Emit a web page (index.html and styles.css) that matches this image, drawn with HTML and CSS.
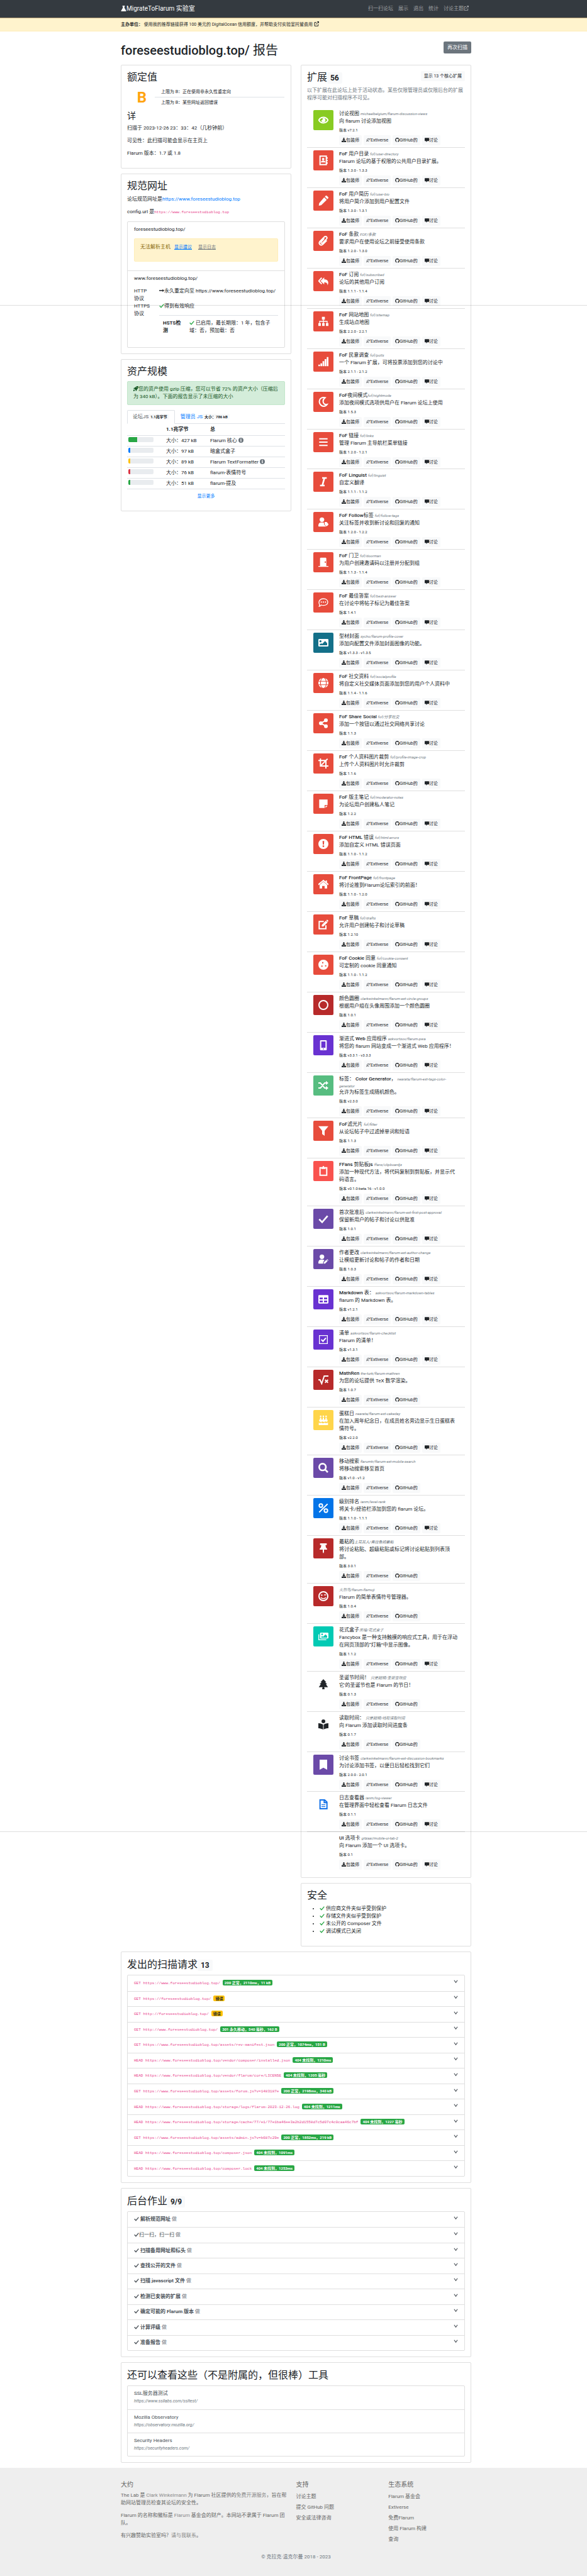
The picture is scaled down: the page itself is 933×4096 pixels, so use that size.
FILE: index.html
```
<!DOCTYPE html>
<html lang="zh-CN">
<head>
<meta charset="utf-8">
<meta name="viewport" content="width=device-width, initial-scale=1">
<title>foreseestudioblog.top/ 报告 - MigrateToFlarum 实验室</title>
<link rel="stylesheet" href="styles.css">
</head>
<body>
<svg class="sprite" aria-hidden="true">
  <symbol id="i-flask" viewBox="0 0 24 24"><path d="M7 0h10v3h-1.500v6.500L22.500 21c.8 1.500-.2 3-1.800 3H3.300c-1.600 0-2.600-1.500-1.800-3l7-11.500V3H7z"/></symbol>
  <symbol id="i-ext" viewBox="0 0 24 24"><path class="ln" d="M12 5H3v17h17v-9M9 15L21 3"/><path d="M14 0h10v10z"/></symbol>
  <symbol id="i-check" viewBox="0 0 24 24"><path class="ln thick" d="M2 13l7 7L22 5"/></symbol>
  <symbol id="i-arrow" viewBox="0 0 24 24"><path d="M0 10h16V5l8 7-8 7v-5H0z"/></symbol>
  <symbol id="i-rocket" viewBox="0 0 24 24"><path d="M23.500.5C16-.8 11 3 8 7.500H3.500L0 13h5l6 6v5l5.500-3.500V16C21 13 24.800 8 23.500.5zM17 5a2 2 0 110 4 2 2 0 010-4zM1 17c2-2 6 0 6 3-1 3-4 3-7 4 0-3 0-6 1-7z"/></symbol>
  <symbol id="i-info" viewBox="0 0 24 24"><path fill-rule="evenodd" d="M12 0a12 12 0 110 24 12 12 0 010-24zm-2 4v4h4V4zM9 10v2h1v5H9v2h6v-2h-1v-7z"/></symbol>
  <symbol id="i-down" viewBox="0 0 24 24"><path class="ln thick" d="M3 6l9 12 9-12"/></symbol>
  <symbol id="i-download" viewBox="0 0 512 512"><path d="M216 0h80c13.300 0 24 10.700 24 24v168h87.700c17.800 0 26.700 21.500 14.100 34.100L269.700 378.300c-7.500 7.500-19.800 7.500-27.300 0L90.100 226.100c-12.600-12.600-3.700-34.100 14.100-34.100H192V24c0-13.300 10.700-24 24-24zm296 376v112c0 13.300-10.700 24-24 24H24c-13.300 0-24-10.700-24-24V376c0-13.300 10.700-24 24-24h146.700l49 49c20.100 20.100 52.500 20.100 72.600 0l49-49H488c13.300 0 24 10.700 24 24z"/></symbol>
  <symbol id="i-planet" viewBox="0 0 24 24"><path class="ln thin" d="M18 9a7 7 0 10-1 7M6 17c-5 4-7 3-3 0C9 14 17 8 21 5c4-2 2 1-2 4"/></symbol>
  <symbol id="i-github" viewBox="0 0 16 16"><path d="M8 0C3.580 0 0 3.580 0 8c0 3.540 2.290 6.530 5.470 7.590.4.070.55-.17.55-.38 0-.19-.01-.82-.01-1.490-2.010.37-2.530-.49-2.690-.94-.09-.23-.48-.94-.82-1.130-.28-.15-.68-.52-.01-.53.63-.01 1.080.58 1.230.82.72 1.210 1.870.87 2.330.66.07-.52.28-.87.51-1.070-1.780-.2-3.640-.89-3.640-3.950 0-.87.31-1.590.82-2.150-.08-.2-.36-1.020.08-2.120 0 0 .67-.21 2.200.82.64-.18 1.320-.27 2-.27.68 0 1.360.09 2 .27 1.530-1.040 2.200-.82 2.200-.82.44 1.100.16 1.920.08 2.120.51.56.82 1.270.82 2.150 0 3.070-1.870 3.750-3.650 3.950.29.25.54.73.54 1.480 0 1.070-.01 1.930-.01 2.200 0 .21.15.46.55.38A8.013 8.013 0 0016 8c0-4.420-3.580-8-8-8z"/></symbol>
  <symbol id="i-bubble" viewBox="0 0 24 24"><path d="M2 1h20a2 2 0 012 2v13a2 2 0 01-2 2h-8l-6 6v-6H2a2 2 0 01-2-2V3a2 2 0 012-2z"/></symbol>
  <symbol id="i-eye" viewBox="0 0 24 24"><path class="ln" d="M1 12C6 3 18 3 23 12 18 21 6 21 1 12z"/><path d="M12 7a5 5 0 11-5 5c2 1 4-1 3-4z"/></symbol>
  <symbol id="i-address" viewBox="0 0 24 24"><path class="ln" d="M4 2h15v20H4zM21 5v3M21 11v3M21 17v3"/><circle cx="11.500" cy="9" r="3"/><path d="M6 17c0-6 11-6 11 0z"/></symbol>
  <symbol id="i-pencil" viewBox="0 0 24 24"><path d="M14 4l6 6L7 23l-6 1 1-6zM15.500 2.500l2-2c1-.8 2-.6 3 .3l2.700 2.700c.9 1 1.100 2 .3 3l-2 2z"/></symbol>
  <symbol id="i-clip" viewBox="0 0 24 24"><path class="ln" d="M14 6l-7 8c-2 3 1 5 3 3l9-9c4-4-1-9-5-5L4 13c-5 6 2 12 7 7l9-9"/></symbol>
  <symbol id="i-reply" viewBox="0 0 24 24"><path d="M14 3v5c8 0 12 5 8 14 0-5-3-7-8-7v5L5 11.500z"/><path class="ln" d="M8 4l-7 7.500L8 19"/></symbol>
  <symbol id="i-sitemap" viewBox="0 0 24 24"><path d="M8.500 1h7v7h-7zM0 16h6v7H0zM9 16h6v7H9zM18 16h6v7h-6z"/><path class="ln thin" d="M12 8v8M3 16v-4h18v4"/></symbol>
  <symbol id="i-signal" viewBox="0 0 24 24"><path d="M0 19h4v4H0zM5 16h4v7H5zM10 11h4v12h-4zM15 6h4v17h-4zM20 1h4v22h-4z"/></symbol>
  <symbol id="i-moon" viewBox="0 0 24 24"><path class="ln" d="M16 2C4-1 0 10 4 17s13 7 17 1C11 20 8 8 16 2z"/></symbol>
  <symbol id="i-bars" viewBox="0 0 24 24"><path class="ln" d="M2 4h20M2 12h20M2 20h20"/></symbol>
  <symbol id="i-italic" viewBox="0 0 24 24"><path class="ln thick" d="M9 3h11M4 21h11M14.500 3l-5 18"/></symbol>
  <symbol id="i-usertag" viewBox="0 0 24 24"><circle cx="8.500" cy="6.500" r="5.500"/><path d="M0 22c0-9 5-9 8.500-9 2 0 4 0 5 1v4l5 5H1zM15 12h5l4 5c1 1-4 6-5 5l-4-4z"/></symbol>
  <symbol id="i-door" viewBox="0 0 24 24"><path fill-rule="evenodd" d="M0 21h4V3c0-1 1-2 2-2h11c1 0 2 1 2 2v18h5v2H0zM15 10v3h3v-3z"/></symbol>
  <symbol id="i-comment" viewBox="0 0 24 24"><path class="ln thin" d="M12 3c14 0 14 16 0 16-2 0-3 0-5-1-1 2-3 3-5 3 2-3 1-4 0-6C0 9 4 3 12 3z"/><circle cx="7" cy="11" r="1.600"/><circle cx="12" cy="11" r="1.600"/><circle cx="17" cy="11" r="1.600"/></symbol>
  <symbol id="i-image" viewBox="0 0 24 24"><path fill-rule="evenodd" d="M2 3h20a2 2 0 012 2v14a2 2 0 01-2 2H2a2 2 0 01-2-2V5a2 2 0 012-2zm3 3a2.500 2.500 0 100 5 2.500 2.500 0 000-5zM3 18h18v-5l-5-5-7 7-2-2-4 3z"/></symbol>
  <symbol id="i-globe" viewBox="0 0 24 24"><path fill-rule="evenodd" d="M12 0c3 0 5 3.500 5.600 7H6.400C7 3.500 9 0 12 0zM8 .7C6.300 2.300 5.200 4.500 4.700 7H1C2.300 4 4.800 1.600 8 .7zm8 0C19.200 1.600 21.700 4 23 7h-3.700C18.800 4.500 17.700 2.300 16 .7zM.4 8.700h4c-.3 2.200-.3 4.400 0 6.600h-4c-.5-2.200-.5-4.400 0-6.600zm5.800 0h11.600c.3 2.200.3 4.400 0 6.600H6.200c-.3-2.200-.3-4.400 0-6.600zm13.400 0h4c.5 2.200.5 4.400 0 6.600h-4c.3-2.200.3-4.400 0-6.600zM1 17h3.700c.5 2.500 1.600 4.700 3.300 6.300C4.800 22.400 2.300 20 1 17zm5.400 0h11.200C17 20.500 15 24 12 24s-5-3.500-5.600-7zm12.900 0H23c-1.300 3-3.800 5.400-7 6.300 1.700-1.600 2.800-3.800 3.300-6.300z"/></symbol>
  <symbol id="i-share" viewBox="0 0 24 24"><circle cx="18" cy="5" r="4.500"/><circle cx="6" cy="12" r="4.500"/><circle cx="18" cy="19" r="4.500"/><path class="ln" d="M18 5L6 12l12 7"/></symbol>
  <symbol id="i-crop" viewBox="0 0 24 24"><path class="ln" d="M5 0v18h19M0 5h18v19M6 17L22 1"/></symbol>
  <symbol id="i-note" viewBox="0 0 24 24"><path d="M2 2h20v13h-7v7H2zM17 17h5l-5 5z"/></symbol>
  <symbol id="i-exclaim" viewBox="0 0 24 24"><path fill-rule="evenodd" d="M12 0a12 12 0 110 24 12 12 0 010-24zm-2 5l.7 8.500h2.600L14 5zm.2 10.500V19h3.600v-3.500z"/></symbol>
  <symbol id="i-home" viewBox="0 0 24 24"><path class="ln" d="M0 13L12 3l12 10M19 3v5"/><path d="M12 6l9 7.500V22h-6v-6H9v6H3v-8.500z"/></symbol>
  <symbol id="i-edit" viewBox="0 0 24 24"><path class="ln" d="M13 5H2v17h16v-8"/><path d="M18 3l4 4-10 10H8v-4zM19 2l1-1c2-1 5 2 3 4l-1 1z"/></symbol>
  <symbol id="i-cookie" viewBox="0 0 24 24"><path fill-rule="evenodd" d="M12 0a12 12 0 110 24 12 12 0 010-24zM9 5.500v3h3v-3zM7 14v3h3v-3zM16 13v3h3v-3z"/></symbol>
  <symbol id="i-circle" viewBox="0 0 24 24"><circle class="ln" cx="12" cy="12" r="10.500"/></symbol>
  <symbol id="i-phone" viewBox="0 0 24 24"><path fill-rule="evenodd" d="M6 0h12a2 2 0 012 2v20a2 2 0 01-2 2H6a2 2 0 01-2-2V2a2 2 0 012-2zm1 3v15h10V3zm4 16.500V22h2v-2.500z"/></symbol>
  <symbol id="i-random" viewBox="0 0 24 24"><path class="ln" d="M0 6h5l10 12h4M0 18h5L15 6h4"/><path d="M18 1l6 5-6 5zM18 13l6 5-6 5z"/></symbol>
  <symbol id="i-filter" viewBox="0 0 24 24"><path d="M0 1h24l-9 11v12l-6-4v-8z"/></symbol>
  <symbol id="i-board" viewBox="0 0 24 24"><path class="ln" d="M4 4h16v18H4z"/><path d="M7 3h3c0-4 4-4 4 0h3v4H7z"/></symbol>
  <symbol id="i-useredit" viewBox="0 0 24 24"><circle cx="8.500" cy="6.500" r="5.500"/><path d="M0 22c0-9 5-9 8.500-9 2 0 4 0 6 2l-3 4v4H1zM13 20l6-6 3 3-6 6h-3zM20 13l1-1 3 3-1 1z"/></symbol>
  <symbol id="i-table" viewBox="0 0 24 24"><path fill-rule="evenodd" d="M2 2h20a2 2 0 012 2v16a2 2 0 01-2 2H2a2 2 0 01-2-2V4a2 2 0 012-2zm1 6v4h7.500V8zm10.500 0v4H21V8zM3 15v4h7.500v-4zm10.500 0v4H21v-4z"/></symbol>
  <symbol id="i-checkbox" viewBox="0 0 24 24"><path class="ln thin" d="M2.500 2.500h19v19h-19z"/><path class="ln" d="M7 12l4 4 7-8"/></symbol>
  <symbol id="i-root" viewBox="0 0 24 24"><path class="ln" d="M0 12h4l4 9 6-18h10M16 12l7 7M23 12l-7 7"/></symbol>
  <symbol id="i-cake" viewBox="0 0 24 24"><path d="M4 6h3v5H4zM10.500 6h3v5h-3zM17 6h3v5h-3zM2 11h20v4c-3 3-4-1-7 1-3 2-4-2-7 0-3 2-4-1-6-1zM1 18c4 3 5-1 8 1s5-2 8 0c3 1 4-1 6-1v6H1z"/><circle cx="5.500" cy="3" r="2"/><circle cx="12" cy="3" r="2"/><circle cx="18.500" cy="3" r="2"/></symbol>
  <symbol id="i-search" viewBox="0 0 24 24"><circle class="ln thick" cx="10" cy="10" r="8"/><path class="ln thick" d="M16 16l6.500 6.500"/></symbol>
  <symbol id="i-percent" viewBox="0 0 24 24"><circle class="ln" cx="6" cy="6" r="4"/><circle class="ln" cx="18" cy="18" r="4"/><path class="ln" d="M22 2L2 22"/></symbol>
  <symbol id="i-pin" viewBox="0 0 24 24"><path d="M4 0h16v4h-3l1 6c2 1 3 3 3 5h-7.500v6L12 24l-1.500-3v-6H3c0-2 1-4 3-5l1-6H4z"/></symbol>
  <symbol id="i-wink" viewBox="0 0 24 24"><circle class="ln" cx="12" cy="12" r="10.500"/><circle cx="8" cy="9.500" r="1.800"/><path class="ln thin" d="M14 10c1-2 3-2 4 0M6 15c3 4 9 4 12 0"/></symbol>
  <symbol id="i-images" viewBox="0 0 24 24"><path fill-rule="evenodd" d="M6 3h16a2 2 0 012 2v10a2 2 0 01-2 2H6a2 2 0 01-2-2V5a2 2 0 012-2zm3 2a2 2 0 100 4 2 2 0 000-4zM7 15h14v-4l-4-4-6 6-2-2-2 2z"/><path class="ln thin" d="M1 7v13h18"/></symbol>
  <symbol id="i-tree" viewBox="0 0 24 24"><path d="M12 0l7 7h-3l5 5h-3l5 7h-9l1 5H9l1-5H1l5-7H3l5-5H5z"/></symbol>
  <symbol id="i-reader" viewBox="0 0 24 24"><circle cx="12" cy="4.500" r="4.500"/><path d="M0 9c4 0 8 1 11.300 3.500V24C8 22 4 21 0 21zM24 9c-4 0-8 1-11.300 3.500V24c3.300-2 7.300-3 11.300-3z"/></symbol>
  <symbol id="i-bookmark" viewBox="0 0 24 24"><path d="M3 0h18v24l-9-5-9 5z"/></symbol>
  <symbol id="i-file" viewBox="0 0 24 24"><path class="ln" d="M4 1.500h11l5.500 5v16H4zM14 1v7h6"/><path class="ln thin" d="M7.500 13h9M7.500 17.500h9"/></symbol>
</svg>

<header class="navbar">
  <div class="container navbar-row">
    <a class="brand" href="#"><svg class="icon"><use href="#i-flask"/></svg>MigrateToFlarum 实验室</a>
    <nav class="nav">
      <a href="#">扫一扫论坛</a><a href="#">展示</a><a href="#">退出</a><a href="#">统计</a><a href="#">讨论主题<svg class="icon"><use href="#i-ext"/></svg></a>
    </nav>
  </div>
</header>
<div class="sponsor">
  <p class="container"><b>主办单位：</b> <a href="#">使用我的推荐链接获得 100 美元的 DigitalOcean 信用额度，并帮助支付实验室托管费用 <svg class="icon"><use href="#i-ext"/></svg></a></p>
</div>

<main class="container">
  <div class="page-head">
    <h1><span class="latin">foreseestudioblog.top/</span> 报告</h1>
    <button class="btn-scan" type="button">再次扫描</button>
  </div>

  <div class="columns">
    <div class="col">
      <section class="card">
        <h2>额定值</h2>
        <div class="rating">
          <div class="grade">B</div>
          <ul class="rating-list"><li>上限为 B：正在使用非永久性重定向</li><li>上限为 B：某些网址返回错误</li></ul>
        </div>
        <h3>详</h3>
        <p>扫描于 2023-12-26 23：33：42（几秒钟前）</p>
        <p>可见性：此扫描可能会显示在主页上</p>
        <p>Flarum 版本：1.7 或 1.8</p>
      </section>

      <section class="card">
        <h2>规范网址</h2>
        <p>论坛规范网址是<a href="#">https://www.foreseestudioblog.top</a></p>
        <p>config.url 是<code>https://www.foreseestudioblog.top</code></p>
        <div class="group">
          <div class="group-item">
            <p>foreseestudioblog.top/</p>
            <div class="alert alert-warning">无法解析主机 <button class="link-btn" type="button">显示建议</button> <button class="link-btn muted" type="button">显示日志</button></div>
          </div>
          <div class="group-item">
            <p>www.foreseestudioblog.top/</p>
            <dl class="protocols">
              <dt>HTTP 协议</dt>
              <dd><svg class="icon"><use href="#i-arrow"/></svg>永久重定向至 https://www.foreseestudioblog.top/</dd>
              <dt>HTTPS 协议</dt>
              <dd><svg class="icon ok"><use href="#i-check"/></svg>得到有效响应
                <div class="hsts"><b>HSTS检测</b><span><svg class="icon ok"><use href="#i-check"/></svg> 已启用，最长期限：1 年，包含子域：否，预加载：否</span></div>
              </dd>
            </dl>
          </div>
        </div>
      </section>

      <section class="card assets">
        <h2>资产规模</h2>
        <div class="alert alert-success"><svg class="icon"><use href="#i-rocket"/></svg>您的资产使用 gzip 压缩，您可以节省 72% 的资产大小（压缩后为 340 kB）。下面的报告显示了未压缩的大小</div>
        <div class="tabs">
          <a class="tab active" href="#">论坛JS <span class="badge light">1.1兆字节</span></a>
          <a class="tab" href="#">管理员 JS <span class="badge light">大小：786 kB</span></a>
        </div>
        <table class="sizes">
          <thead><tr><th class="c-bar"></th><th class="c-size">1.1兆字节</th><th>总</th></tr></thead>
          <tbody>
            <tr><td><div class="bar"><i class="green" style="width:35%"></i></div></td><td>大小：427 kB</td><td>Flarum 核心 <svg class="icon info"><use href="#i-info"/></svg></td></tr>
            <tr><td><div class="bar"><i class="blue" style="width:8%"></i></div></td><td>大小：97 kB</td><td>暗盒式盒子</td></tr>
            <tr><td><div class="bar"><i class="amber" style="width:8%"></i></div></td><td>大小：89 kB</td><td>Flarum TextFormatter <svg class="icon info"><use href="#i-info"/></svg></td></tr>
            <tr><td><div class="bar"><i class="crimson" style="width:7%"></i></div></td><td>大小：76 kB</td><td>flarum-表情符号</td></tr>
            <tr><td><div class="bar"><i class="green" style="width:7%"></i></div></td><td>大小：51 kB</td><td>flarum-提及</td></tr>
          </tbody>
        </table>
        <button class="link-btn more" type="button">显示更多</button>
      </section>
    </div>

    <div class="col">
      <section class="card">
        <div class="card-head">
          <h2>扩展 <span class="badge light">56</span></h2>
          <button class="btn-light" type="button">显示 13 个核心扩展</button>
        </div>
        <p class="lead">以下扩展在此论坛上处于活动状态。某些仅限管理员或仅限后台的扩展程序可能对扫描程序不可见。</p>
        <ul class="extensions" id="extensions"></ul>
      </section>
      <section class="card">
        <h2>安全</h2>
        <ul class="security">
          <li><svg class="icon ok"><use href="#i-check"/></svg> 供应商文件夹似乎受到保护</li>
          <li><svg class="icon ok"><use href="#i-check"/></svg> 存储文件夹似乎受到保护</li>
          <li><svg class="icon ok"><use href="#i-check"/></svg> 未公开的 Composer 文件</li>
          <li><svg class="icon ok"><use href="#i-check"/></svg> 调试模式已关闭</li>
        </ul>
      </section>
    </div>
  </div>

  <section class="card wide">
    <h2>发出的扫描请求 <span class="badge light">13</span></h2>
    <div class="rows requests" id="requests"></div>
  </section>
  <section class="card wide">
    <h2>后台作业 <span class="badge light">9/9</span></h2>
    <div class="rows jobs" id="jobs"></div>
  </section>
  <section class="card wide">
    <h2>还可以查看这些（不是附属的，但很棒）工具</h2>
    <div class="rows tools">
      <a class="row" href="#">SSL服务器测试<em>https://www.ssllabs.com/ssltest/</em></a>
      <a class="row" href="#">Mozilla Observatory<em>https://observatory.mozilla.org/</em></a>
      <a class="row" href="#">Security Headers<em>https://securityheaders.com/</em></a>
    </div>
  </section>
</main>

<footer class="footer">
  <div class="container">
    <div class="footer-grid">
      <div>
        <h4>大约</h4>
        <p>The Lab 是 <a href="#">Clark Winkelmann</a> 为 Flarum 社区提供的<a href="#">免费开源服务</a>，旨在帮助网站管理员检查其论坛的安全性。</p>
        <p>Flarum 的名称和徽标是 <a href="#">Flarum</a> 基金会的财产。本网站不隶属于 Flarum 团队。</p>
        <p>有兴趣赞助实验室吗？<a href="#">请与我联系</a>。</p>
      </div>
      <div>
        <h4>支持</h4>
        <ul><li><a href="#">讨论主题</a></li><li><a href="#">提交 GitHub 问题</a></li><li><a href="#">安全或法律咨询</a></li></ul>
      </div>
      <div>
        <h4>生态系统</h4>
        <ul><li><a href="#">Flarum 基金会</a></li><li><a href="#">Extiverse</a></li><li><a href="#">免费Flarum</a></li><li><a href="#">使用 Flarum 构建</a></li><li><a href="#">查询</a></li></ul>
      </div>
    </div>
    <p class="copyright">© 克拉克·温克尔曼 2018 - 2023</p>
  </div>
</footer>
<script src="script.js"></script>
</body>
</html>
```
FILE: styles.css
```
* { box-sizing: border-box; }
body {
  position: relative;
  margin: 0;
  background: #fff;
  color: #212529;
  font: 8px/12px Roboto, "Noto Sans CJK SC", sans-serif;
}
/* page-wide hairlines */
body::before, body::after {
  content: "";
  position: absolute;
  left: 0;
  right: 0;
  height: 1px;
  background: rgba(0, 0, 0, .13);
}
body::before { top: 485px; }
body::after { top: 2912px; }
h1, h2, h3, h4, p, ul, dl, dd { margin: 0; padding: 0; font-weight: 400; }
ul { list-style: none; }
a { color: #007bff; text-decoration: none; }
button { font: inherit; border: 0; margin: 0; padding: 0; background: none; cursor: pointer; }
code { font: 6px/12px "Liberation Mono", "DejaVu Sans Mono", monospace; color: #e83e8c; }

.sprite { display: none; }
.icon { width: 8px; height: 8px; fill: currentColor; vertical-align: -1px; }
.ln { fill: none; stroke: currentColor; stroke-width: 3; }
.thick { stroke-width: 4; }
.thin { stroke-width: 2; }
.ok { color: #28a745; }
.info { color: #6c757d; }

.navbar, .sponsor, .footer { padding-left: 8px; }
.container { max-width: 573px; margin: 0 auto; padding: 0 8px; }
main.container { display: flow-root; max-width: 581px; padding: 0 8px 0 16px; }

.navbar { background: #343a40; border-bottom: 1px solid #b39d75; }
.navbar-row { display: flex; align-items: center; justify-content: space-between; height: 28px; }
.brand { color: #fff; font-size: 10px; white-space: nowrap; }
.brand .icon { width: 9px; height: 11px; vertical-align: -2px; }
.nav { display: flex; }
.nav a { color: rgba(255, 255, 255, .5); padding: 0 4px; }
.sponsor { background: #fff3cd; border-bottom: 1px solid #ffeeba; }
.sponsor p { padding-top: 4px; padding-bottom: 4px; font-size: 7px; }
.sponsor a { color: #212529; }

.page-head { display: flex; align-items: flex-start; justify-content: space-between; padding: 16px 0 9px; }
h1 { font-size: 20px; line-height: 28px; }
.latin { font-weight: 500; }
.btn-scan { height: 19px; padding: 0 6px; border-radius: 2px; background: #6c757d; color: #fff; }

.columns { display: grid; grid-template-columns: 1fr 1fr; gap: 15px; align-items: start; }
.card { margin-bottom: 8px; padding: 9px; border: 1px solid #dfdfdf; border-radius: 2px; background: #fff; }
h2 { margin-bottom: 5px; font-size: 16px; line-height: 20px; }
.wide h2 { line-height: 22px; }
h3 { margin: 5px 0 6px; font-size: 14px; line-height: 16px; }
.card p { margin-bottom: 8px; }
.badge { display: inline-block; padding: 0 3px; border-radius: 2px; font-weight: 700; font-size: 6px; line-height: 9px; color: #fff; }
.badge.light { background: #f8f9fa; color: #212529; }
h2 .badge { margin-left: -4px; padding: 0 5px; font-size: 12px; line-height: 18px; }

.rating { display: grid; grid-template-columns: 44px 1fr; align-items: center; padding-right: 1px; }
.grade { padding-left: 3px; text-align: center; font-size: 24px; line-height: 32px; font-weight: 700; color: #ffa410; }
.rating-list li { padding: 2px 10px; font-size: 7px; }
.rating-list li + li { border-top: 1px solid #dee2e6; }

.group { border: 1px solid #dfdfdf; border-radius: 2px; }
.group-item { padding: 6px 10px; }
.group-item + .group-item { border-top: 1px solid #dfdfdf; }
.alert { margin-bottom: 8px; border: 1px solid; border-radius: 2px; }
.alert-warning { padding: 7px 9px 16px; background: #fff3cd; border-color: #ffeeba; color: #856404; }
.alert-success { padding: 6px 9px; background: #d4edda; border-color: #c3e6cb; color: #155724; }
.link-btn { color: #007bff; font-size: 7px; }
.alert .link-btn { margin: 0 4px; text-decoration: underline; }
.link-btn.muted { color: #6c757d; }
.protocols { display: grid; grid-template-columns: 40px 1fr; }
.protocols dt { padding-right: 14px; }
.hsts { display: grid; grid-template-columns: 42px 1fr; margin: 8px 0; padding: 6px; border-top: 1px solid #dee2e6; }
.hsts b { padding-right: 10px; }

.tabs { display: flex; border-bottom: 1px solid #dee2e6; }
.tab { margin-bottom: -1px; padding: 4px 8px; border: 1px solid transparent; border-radius: 2px 2px 0 0; white-space: nowrap; }
.tab.active { color: #495057; border-color: #dee2e6 #dee2e6 #fff; background: #fff; }
.tab .badge { margin-left: -2px; }
.sizes { width: 100%; border-collapse: collapse; }
.sizes th, .sizes td { padding: 2px; border-bottom: 1px solid #dee2e6; text-align: left; vertical-align: top; }
.sizes th { padding: 3px 2px; }
.c-bar { width: 60px; }
.c-size { width: 70px; }
.bar { width: 40px; height: 8px; border-radius: 2px; overflow: hidden; background: #e9ecef; }
.bar i { display: block; height: 8px; }
.green { background: #28a745; }
.blue { background: #007bff; }
.amber { background: #ffc107; }
.crimson { background: #dc3545; }
.more { display: block; margin: 5px auto 0; }
.assets { padding-bottom: 17px; }

.card-head { display: flex; justify-content: space-between; align-items: flex-start; }
.btn-light { padding: 2px 5px; border-radius: 2px; background: #f8f9fa; color: #212529; font-size: 7px; }
.card .lead { margin-bottom: 9px; color: #6c757d; }

.extensions { display: flex; flex-direction: column; min-height: 2805px; }
.ext { flex: 1 0 auto; display: grid; grid-template-columns: 32px 1fr; gap: 9px; padding: 4px 9px 2px 10px; border-bottom: 1px solid #dfdfdf; }
.ext:last-child { border-bottom: 0; }
.tile { display: grid; place-items: center; width: 32px; height: 32px; border-radius: 2px; color: #fff; }
.tile .icon { width: 16px; height: 16px; }
.lime { background: #88cb22; }
.red { background: #e74c3c; }
.teal { background: #147089; }
.dark { background: #b72a2a; }
.violet { background: #6932d1; }
.mint { background: #57bd80; }
.coral { background: #f9524e; }
.purple { background: #6b4aa8; }
.yellow { background: #ffd54a; }
.azure { background: #0374e8; }
.turquoise { background: #02cab4; }
.tile.plain { color: #212529; }
.tile.doc { color: #1472e8; }
.ext-title { font-size: 6px; line-height: 9px; min-height: 12px; }
.ext-name { font-size: 8px; line-height: 12px; }
.ext-title em { color: #6c757d; }
.ext-version { font-size: 6px; line-height: 16px; }
.ext-links { display: flex; gap: 3px; }
.ext-links a { padding: 2px 4px; border-radius: 2px; background: #f8f9fa; color: #212529; font-size: 7px; white-space: nowrap; }
.ext-links .icon { width: 7px; height: 7px; }

.security { margin-bottom: 8px; padding-left: 20px; list-style: disc; }

.rows { display: grid; grid-auto-rows: 1fr; border: 1px solid #dfdfdf; border-radius: 2px; }
.row { display: flex; align-items: center; justify-content: space-between; padding: 5px 10px; color: #495057; text-align: left; }
.row + .row { border-top: 1px solid #dfdfdf; }
.row > .icon { width: 7px; height: 7px; margin: 0 0 5px; }
.requests { min-height: 321px; }
.jobs { min-height: 222px; }
.row .badge { margin-left: 2px; }
.badge.success { background: #28a745; }
.badge.warning { background: #ffc107; color: #212529; }
.row .state { color: #6c757d; }
.tools .row { display: block; padding: 6px 10px; }
.row em { display: block; font-size: 7px; color: #6c757d; }

.footer { background: #eee; color: #666; }
.footer .container { padding-top: 21px; padding-bottom: 29px; }
.footer-grid { display: grid; grid-template-columns: 2fr 1fr 1fr; gap: 15px; }
h4 { font-size: 10px; line-height: 12px; margin-bottom: 5px; }
.footer p { margin-bottom: 8px; }
.footer a { color: #888; }
.footer ul { padding-top: 2px; }
.footer li { margin-bottom: 5px; }
.footer li a { color: #666; }
.footer .copyright { margin: 11px 0 0; text-align: center; color: #6c757d; }
```
FILE: script.js
```
// [tile colour, icon, name, package, description, version, has discussion link]
const extensions = [
  ["lime", "eye", "讨论视图 ", "michaelbelgium/flarum-discussion-views", "向 flarum 讨论添加视图", "v7.2.1", 1],
  ["red", "address", "FoF 用户目录 ", "fof/user-directory", "Flarum 论坛的基于权限的公共用户目录扩展。", "1.3.0 - 1.3.3", 1],
  ["red", "pencil", "FoF 用户简历 ", "fof/user-bio", "将用户简介添加到用户配置文件", "1.3.0 - 1.3.1", 1],
  ["red", "clip", "FoF 条款 ", "FOF/条款", "要求用户在使用论坛之前接受使用条款", "1.2.0 - 1.3.0", 1],
  ["red", "reply", "FoF 订阅 ", "fof/subscribed", "论坛的其他用户订阅", "1.1.1 - 1.1.4", 1],
  ["red", "sitemap", "FoF 网站地图 ", "fof/sitemap", "生成站点地图", "2.2.0 - 2.2.1", 1],
  ["red", "signal", "FoF 民意调查 ", "fof/polls", "一个 Flarum 扩展，可将投票添加到您的讨论中", "2.1.1 - 2.1.2", 1],
  ["red", "moon", "FoF夜间模式", "fof/nightmode", "添加夜间模式选项供用户在 Flarum 论坛上使用", "1.5.3", 1],
  ["red", "bars", "FoF 链接 ", "fof/links", "管理 Flarum 主导航栏菜单链接", "1.2.0 - 1.2.1", 1],
  ["red", "italic", "FoF Linguist ", "fof/linguist", "自定义翻译", "1.1.1 - 1.1.2", 1],
  ["red", "usertag", "FoF Follow标签 ", "fof/follow-tags", "关注标签并收到新讨论和回复的通知", "1.2.0 - 1.2.2", 1],
  ["red", "door", "FoF 门卫 ", "fof/doorman", "为用户创建邀请码以注册并分配到组", "1.1.3 - 1.1.4", 1],
  ["red", "comment", "FoF 最佳答案 ", "fof/best-answer", "在讨论中将帖子标记为最佳答案", "1.4.1", 1],
  ["teal", "image", "型材封面 ", "sycho/flarum-profile-cover", "添加向配置文件添加封面图像的功能。", "v1.3.3 - v1.3.5", 1],
  ["red", "globe", "FoF 社交资料 ", "fof/socialprofile", "将自定义社交媒体页面添加到您的用户个人资料中", "1.1.4 - 1.1.6", 1],
  ["red", "share", "FoF Share Social ", "fof/分享社交", "添加一个按钮以通过社交网络共享讨论", "1.1.3", 1],
  ["red", "crop", "FoF 个人资料图片裁剪 ", "fof/profile-image-crop", "上传个人资料图片时允许裁剪", "1.1.6", 1],
  ["red", "note", "FoF 版主笔记 ", "fof/moderator-notes", "为论坛用户创建私人笔记", "1.2.2", 1],
  ["red", "exclaim", "FoF HTML 错误 ", "fof/html-errors", "添加自定义 HTML 错误页面", "1.1.0 - 1.1.2", 1],
  ["red", "home", "FoF FrontPage ", "fof/frontpage", "将讨论推到Flarum论坛索引的前面！", "1.1.0 - 1.2.0", 1],
  ["red", "edit", "FoF 草稿 ", "fof/drafts", "允许用户创建帖子和讨论草稿", "1.2.10", 1],
  ["red", "cookie", "FoF Cookie 同意 ", "fof/cookie-consent", "可定制的 cookie 同意通知", "1.1.0 - 1.1.2", 1],
  ["dark", "circle", "颜色圆圈 ", "clarkwinkelmann/flarum-ext-circle-groups", "根据用户组在头像周围添加一个颜色圆圈", "1.0.1", 1],
  ["violet", "phone", "渐进式 Web 应用程序 ", "askvortsov/flarum-pwa", "将您的 flarum 网站变成一个渐进式 Web 应用程序！", "v3.3.1 - v3.3.3", 1],
  ["mint", "random", "标签： Color Generator， ", "nearata/flarum-ext-tags-color-generator", "允许为标签生成随机颜色。", "v2.3.0", 1],
  ["red", "filter", "FoF滤光片 ", "fof/filter", "从论坛帖子中过滤掉单词和短语", "1.1.3", 1],
  ["coral", "board", "FFans 剪贴板js ", "ffans/clipboardjs", "添加一种现代方法，将代码复制到剪贴板，并显示代码语言。", "v0.1.0-beta.16 - v1.0.0", 1],
  ["purple", "check", "首次批准后 ", "clarkwinkelmann/flarum-ext-first-post-approval", "保留新用户的帖子和讨论以供批准", "1.0.1", 1],
  ["purple", "useredit", "作者更改 ", "clarkwinkelmann/flarum-ext-author-change", "让模组更新讨论和帖子的作者和日期", "1.0.3", 1],
  ["violet", "table", "Markdown 表： ", "askvortsov/flarum-markdown-tables", "flarum 的 Markdown 表。", "v1.2.1", 1],
  ["violet", "checkbox", "清单 ", "askvortsov/flarum-checklist", "Flarum 的清单！", "v1.3.1", 1],
  ["dark", "root", "MathRen ", "the-turk/flarum-mathren", "为您的论坛提供 TeX 数学渲染。", "1.0.7", 0],
  ["yellow", "cake", "蛋糕日 ", "nearata/flarum-ext-cakeday", "在加入周年纪念日，在成员姓名旁边显示生日蛋糕表情符号。", "v2.2.0", 1],
  ["purple", "search", "移动搜索 ", "flarumtr/flarum-ext-mobile-search", "将移动搜索移至首页", "v1.0 - v1.2", 0],
  ["azure", "percent", "级别排名 ", "ianm/level-rank", "将关卡/经验栏添加到您的 flarum 论坛。", "1.1.0 - 1.1.1", 1],
  ["dark", "pin", "最粘的", "土耳其人/弗拉鲁姆最粘", "将讨论粘贴、超级粘贴或标记将讨论粘贴到列表顶部。", "3.0.1", 0],
  ["dark", "wink", "", "火烈鸟/flarum-flamoji", "Flarum 的简单表情符号管理器。", "1.0.4", 0],
  ["turquoise", "images", "花式盒子", "黑暗/花式盒子", "Fancybox 是一种支持触摸的响应式工具，用于在浮动在网页顶部的“灯箱”中显示图像。", "1.1.2", 1],
  ["plain", "tree", "圣诞节时间！ ", "只是超频/圣诞雪效应", "它'的圣诞节也是 Flarum 的节日！", "0.1.3", 0],
  ["plain", "reader", "读取时间： ", "只是超频/线程读取时间", "向 Flarum 添加读取时间进度条", "0.1.7", 0],
  ["purple", "bookmark", "讨论书签 ", "clarkwinkelmann/flarum-ext-discussion-bookmarks", "为讨论添加书签，以便日后轻松找到它们", "2.0.0 - 2.0.1", 1],
  ["doc", "file", "日志查看器 ", "ianm/log-viewer", "在管理界面中轻松查看 Flarum 日志文件", "0.1.1", 1],
  ["plain", "", "UI 选项卡 ", "gitzaai/mobile-ui-tab-2", "向 Flarum 添加一个 UI 选项卡。", "0.1", 1]
];

const requests = [
  ["GET https://www.foreseestudioblog.top/", "200 正常，2110ms，11 kB"],
  ["GET https://foreseestudioblog.top/", "错误"],
  ["GET http://foreseestudioblog.top/", "错误"],
  ["GET http://www.foreseestudioblog.top/", "301 永久移动，540 毫秒，162 B"],
  ["GET https://www.foreseestudioblog.top/assets/rev-manifest.json", "200 正常，1074ms，151 B"],
  ["HEAD https://www.foreseestudioblog.top/vendor/composer/installed.json", "404 未找到，1210ms"],
  ["HEAD https://www.foreseestudioblog.top/vendor/flarum/core/LICENSE", "404 未找到，1205 毫秒"],
  ["GET https://www.foreseestudioblog.top/assets/forum.js?v=1483187e", "200 正常，2198ms，340 kB"],
  ["HEAD https://www.foreseestudioblog.top/storage/logs/flarum-2023-12-26.log", "404 未找到，1211ms"],
  ["HEAD https://www.foreseestudioblog.top/storage/cache/77/e1/77e1ba46ee3a2b2d1558d7c5d07c4c0caa46c7bf", "404 未找到，1227 毫秒"],
  ["GET https://www.foreseestudioblog.top/assets/admin.js?v=b687c29e", "200 正常，1852ms，219 kB"],
  ["HEAD https://www.foreseestudioblog.top/composer.json", "404 未找到，1091ms"],
  ["HEAD https://www.foreseestudioblog.top/composer.lock", "404 未找到，1253ms"]
];

const jobs = [
  " <b>解析规范网址</b>", "扫一扫，扫一扫", " <b>扫描备用网址和标头</b>", " <b>查找公开的文件</b>",
  " <b>扫描 javascript 文件</b>", " <b>检测已安装的扩展</b>", " <b>确定可能的 Flarum 版本</b>",
  " <b>计算评级</b>", " <b>准备报告</b>"
];

const icon = name => name ? `<svg class="icon"><use href="#i-${name}"/></svg>` : "";
const link = (name, text) => `<a href="#">${icon(name)}${text}</a>`;
// Latin words in a name are set heavier than the Chinese around them
const emphasise = name => name.replace(/[A-Za-z]+/g, '<span class="latin">$&</span>');

document.getElementById("extensions").innerHTML = extensions.map(([tile, glyph, name, pkg, text, version, talk]) => `
  <li class="ext">
    <div class="tile ${tile}">${icon(glyph)}</div>
    <div>
      <div class="ext-title"><span class="ext-name">${emphasise(name)}</span><em>${pkg}</em></div>
      <div>${text}</div>
      <div class="ext-version">版本 ${version}</div>
      <div class="ext-links">${link("download", "包装师")}${link("planet", "Extiverse")}${link("github", "GitHub的")}${talk ? link("bubble", "讨论") : ""}</div>
    </div>
  </li>`).join("");

document.getElementById("requests").innerHTML = requests.map(([url, result]) => `
  <button class="row" type="button"><span><code>${url}</code> <span class="badge ${result === "错误" ? "warning" : "success"}">${result}</span></span>${icon("down")}</button>`).join("");

document.getElementById("jobs").innerHTML = jobs.map(name => `
  <button class="row" type="button"><span>${icon("check")}${name} <span class="state">做</span></span>${icon("down")}</button>`).join("");
```
